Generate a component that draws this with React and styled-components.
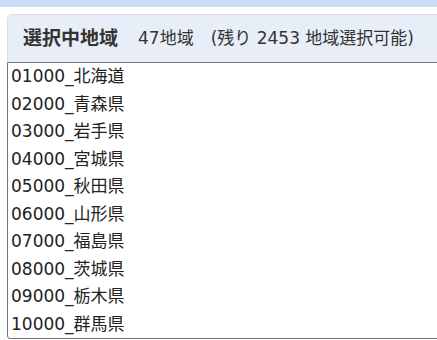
import React from 'react'
import styled, { createGlobalStyle } from "styled-components"

const Global = createGlobalStyle`
  html, body {
    margin: 0;
    padding: 0;
    background: #fff;
    font-family: "DejaVu Sans", "Noto Sans CJK JP", sans-serif;
    color: #222;
  }
`;

const TopStrip = styled.div`
  height: 7px;
  background-color: #c8dcf6;
`;

const Wrapper = styled.div`
  padding: 7px 0 0 7px;
  overflow: hidden;
  height: 333px;
  box-sizing: border-box;
`;

const Header = styled.div`
  display: flex;
  align-items: center;
  height: 48px;
  box-sizing: border-box;
  margin-right: -20px;
  padding: 0 0 5px 15px;
  background-color: #e8eef7;
  border: 1px solid #d8dde3;
  border-bottom: none;
  border-radius: 5px 5px 0 0;
  white-space: nowrap;
`;

const Title = styled.span`
  font-family: "Noto Sans CJK JP", sans-serif;
  font-size: 19px;
  font-weight: 700;
  color: #333;
  margin-right: 20px;
`;

const Count = styled.span`
  font-size: 17px;
  color: #333;
  margin-right: ${(props) => props.gap || 0}px;
`;

const ListBox = styled.div`
  height: 277px;
  box-sizing: border-box;
  margin-right: -20px;
  border: 1px solid #767676;
  border-radius: 0 0 0 3px;
  padding: 0 3px;
  overflow: hidden;
`;

const Option = styled.div`
  height: 27.5px;
  line-height: 27.5px;
  font-size: 17px;
  color: #222;
  white-space: nowrap;
`;

const areas = [
  "01000_北海道",
  "02000_青森県",
  "03000_岩手県",
  "04000_宮城県",
  "05000_秋田県",
  "06000_山形県",
  "07000_福島県",
  "08000_茨城県",
  "09000_栃木県",
  "10000_群馬県",
];

const App = () => {
  return (
    <>
      <Global />
      <TopStrip />
      <Wrapper>
        <Header>
          <Title>選択中地域</Title>
          <Count gap={17}>47地域</Count>
          <Count>(残り 2453 地域選択可能)</Count>
        </Header>
        <ListBox>
          {areas.map((a) => (
            <Option key={a}>{a}</Option>
          ))}
        </ListBox>
      </Wrapper>
    </>
  )
}

export default App
